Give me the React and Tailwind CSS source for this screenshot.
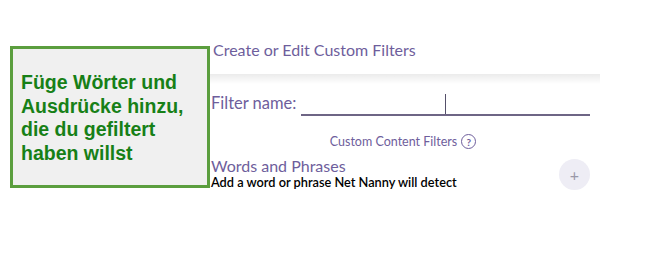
export default function App() {
  return (
    <div className="w-[650px] h-[258px] bg-white flex items-start" style={{ fontFamily: 'Lato, "Noto Sans", sans-serif' }}>
      {/* Callout */}
      <div className="ml-[10px] mt-[46px] w-[200px] h-[142px] bg-[#f0f0f0] border-[3px] border-[#5b9e3e] pl-[8px] pr-[4px] pt-[22px]">
        <p className="text-[19.5px] leading-[23.5px] font-bold text-[#178017]" style={{ fontFamily: '"Liberation Sans", Arial, sans-serif' }}>
          Füge Wörter und Ausdrücke hinzu, die du gefiltert haben willst
        </p>
      </div>

      {/* Panel */}
      <div className="w-[390px] flex flex-col pt-[38px]">
        <div className="h-[36px] pl-[3px] pt-[2px] text-[16px] leading-[19px] text-[#6e5e9c]">
          Create or Edit Custom Filters
        </div>
        <div className="h-[10px] bg-gradient-to-b from-[#ebebeb] to-white" />

        <div className="flex items-end pl-[1px] mt-[8px] h-[24px]">
          <span className="text-[16.5px] leading-[19px] text-[#6e5e9c] pb-[3px]">Filter name:</span>
          <div className="ml-[5px] w-[289px] h-[22px] border-b-2 border-[#6e6585] flex">
            <div className="ml-[144px] w-px h-[20px] bg-[#55506a]" />
          </div>
        </div>

        <div className="mt-[18px] flex items-center justify-center gap-[4px] text-[12.5px] leading-[15px] text-[#6e5e9c] pr-[4px]">
          <span>Custom Content Filters</span>
          <span className="w-[15px] h-[15px] rounded-full border-[1.5px] border-[#6e5e9c] flex items-center justify-center text-[10px] font-bold leading-none">?</span>
        </div>

        <div className="mt-[8px] flex items-center pr-[10px]">
          <div className="flex-1 pl-[1px]">
            <div className="text-[16px] leading-[18px] text-[#6e5e9c]">Words and Phrases</div>
            <div className="text-[12.75px] leading-[15px] text-black font-semibold">Add a word or phrase Net Nanny will detect</div>
          </div>
          <div className="w-[31px] h-[31px] rounded-full bg-[#eeedf5] flex items-center justify-center text-[#9a98a8] text-[16px] leading-none mt-[2px]">+</div>
        </div>
      </div>
    </div>
  )
}
